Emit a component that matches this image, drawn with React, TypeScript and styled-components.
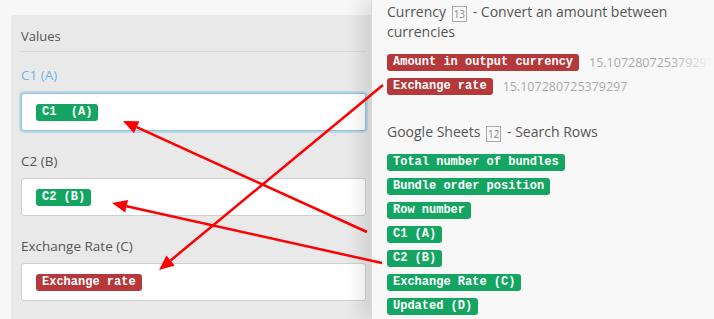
import React from 'react'
import styled, { createGlobalStyle } from 'styled-components'

const GlobalStyle = createGlobalStyle`
  html, body {
    margin: 0;
    padding: 0;
    background: #f7f7f7;
    font-family: 'Open Sans', 'Noto Sans', sans-serif;
  }
`

const Page = styled.div`
  position: relative;
  width: 714px;
  height: 319px;
  display: flex;
  overflow: hidden;
  background: #f7f7f7;
`

const LeftArea = styled.div`
  width: 371px;
  flex-shrink: 0;
  overflow: hidden;
  padding-top: 15px;
`

const Panel = styled.div`
  margin-left: 11px;
  width: 365px;
  height: 320px;
  box-sizing: border-box;
  background: #e9e9e9;
  border-radius: 4px 0 0 0;
  padding: 12px 10px 0;
`

const PanelTitle = styled.div`
  font-size: 13px;
  color: #555;
  line-height: 18px;
  padding-bottom: 6px;
  border-bottom: 1px solid #dadada;
`

const FieldLabel = styled.div<{ active?: boolean }>`
  font-size: 13.5px;
  line-height: 20px;
  color: ${p => (p.active ? '#72b4e4' : '#555')};
  margin-top: ${p => (p.active ? '13px' : '20px')};
  margin-bottom: ${p => (p.active ? '8px' : '7px')};
`

const Input = styled.div<{ focused?: boolean }>`
  box-sizing: border-box;
  height: 38px;
  background: #fff;
  border: 1px solid ${p => (p.focused ? '#8cc1e0' : '#cfcfcf')};
  border-radius: 3px;
  box-shadow: ${p => (p.focused ? '0 0 0 2px #bfd6e6' : 'none')};
  display: flex;
  align-items: center;
  padding-left: 14px;
`

const Pill = styled.span<{ tone: 'green' | 'red' }>`
  display: inline-block;
  font-family: 'Liberation Mono', 'Courier New', monospace;
  font-weight: bold;
  font-size: 12px;
  line-height: 17px;
  height: 17px;
  padding: 0 6px;
  border-radius: 3px;
  color: #fff;
  white-space: pre;
  background: ${p => (p.tone === 'green' ? '#14a562' : '#b5383a')};
`

const SidePanel = styled.div`
  flex: 1;
  position: relative;
  z-index: 1;
  background: #f8f8f8;
  border-left: 1px solid #d9d9d9;
  box-shadow: -12px 0 14px rgba(0, 0, 0, 0.09);
  padding: 2px 0 0 15px;
  overflow: hidden;

  &::after {
    content: '';
    position: absolute;
    top: 0;
    right: 0;
    bottom: 0;
    width: 44px;
    background: linear-gradient(to right, rgba(248, 248, 248, 0), #f8f8f8);
  }
`

const Section = styled.div`
  margin-bottom: 24px;
`

const SectionTitle = styled.div`
  font-size: 14px;
  line-height: 20px;
  color: #555;
  margin-bottom: 8px;
  padding-right: 20px;
`

const Count = styled.span`
  display: inline-block;
  font-size: 10px;
  line-height: 14px;
  height: 14px;
  min-width: 11px;
  text-align: center;
  padding: 0 1px;
  margin: 0 2px;
  border: 1px solid #aaa;
  color: #888;
  vertical-align: -1px;
`

const OutputRow = styled.div`
  display: flex;
  align-items: center;
  gap: 10px;
  height: 24px;
  white-space: nowrap;
`

const Value = styled.span`
  font-size: 12.5px;
  color: #aaa;
`

const Arrows = styled.svg`
  position: absolute;
  left: 0;
  top: 0;
  z-index: 2;
  pointer-events: none;
`

const arrows = [
  { x1: 367, y1: 232, x2: 123, y2: 121 },
  { x1: 382, y1: 263, x2: 112, y2: 203 },
  { x1: 383, y1: 85, x2: 159, y2: 270 },
]

const sheetFields = [
  'Total number of bundles',
  'Bundle order position',
  'Row number',
  'C1 (A)',
  'C2 (B)',
  'Exchange Rate (C)',
  'Updated (D)',
]

const Arrow: React.FC<{ x1: number; y1: number; x2: number; y2: number }> = ({ x1, y1, x2, y2 }) => {
  const a = Math.atan2(y2 - y1, x2 - x1)
  const len = 15
  const w = 6.5
  const bx = x2 - Math.cos(a) * len
  const by = y2 - Math.sin(a) * len
  const px = -Math.sin(a) * w
  const py = Math.cos(a) * w
  return (
    <g>
      <line x1={x1} y1={y1} x2={bx} y2={by} stroke="#f00" strokeWidth={2.5} />
      <polygon points={`${x2},${y2} ${bx + px},${by + py} ${bx - px},${by - py}`} fill="#f00" />
    </g>
  )
}

const App: React.FC = () => {
  return (
    <Page>
      <GlobalStyle />
      <LeftArea>
        <Panel>
          <PanelTitle>Values</PanelTitle>
          <FieldLabel active>C1 (A)</FieldLabel>
          <Input focused>
            <Pill tone="green">{'C1  (A)'}</Pill>
          </Input>
          <FieldLabel>C2 (B)</FieldLabel>
          <Input>
            <Pill tone="green">C2 (B)</Pill>
          </Input>
          <FieldLabel>Exchange Rate (C)</FieldLabel>
          <Input>
            <Pill tone="red">Exchange rate</Pill>
          </Input>
        </Panel>
      </LeftArea>
      <SidePanel>
        <Section>
          <SectionTitle>
            Currency <Count>13</Count> - Convert an amount between currencies
          </SectionTitle>
          <OutputRow>
            <Pill tone="red">Amount in output currency</Pill>
            <Value>15.107280725379297</Value>
          </OutputRow>
          <OutputRow>
            <Pill tone="red">Exchange rate</Pill>
            <Value>15.107280725379297</Value>
          </OutputRow>
        </Section>
        <Section>
          <SectionTitle>
            Google Sheets <Count>12</Count> - Search Rows
          </SectionTitle>
          {sheetFields.map(f => (
            <OutputRow key={f}>
              <Pill tone="green">{f}</Pill>
            </OutputRow>
          ))}
        </Section>
      </SidePanel>
      <Arrows width={714} height={319}>
        {arrows.map((a, i) => (
          <Arrow key={i} {...a} />
        ))}
      </Arrows>
    </Page>
  )
}

export default App
